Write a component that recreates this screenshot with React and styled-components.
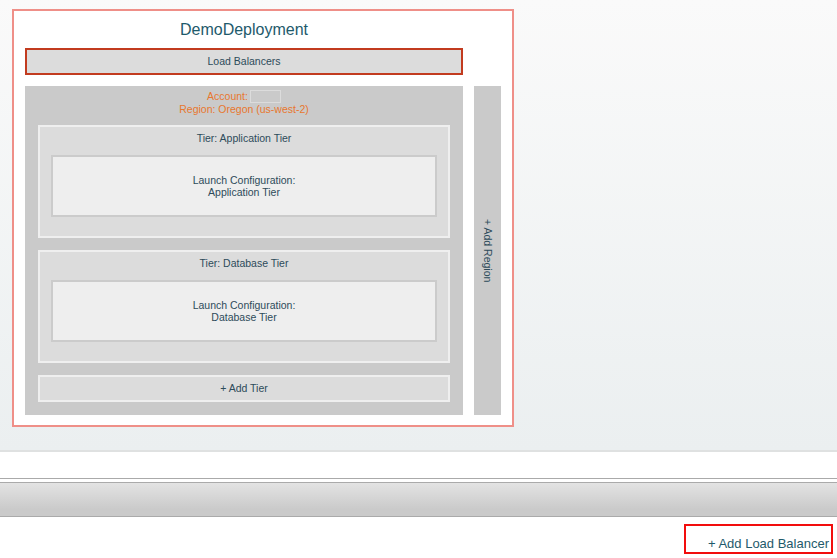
import styled, { createGlobalStyle } from "styled-components"

const GlobalStyle = createGlobalStyle`
    body {
        margin: 0;
        background: #ffffff;
        font-family: "Liberation Sans", Arial, Helvetica, sans-serif;
    }
`

const Canvas = styled.div`
    height: 441px;
    padding: 9px 0 0 12px;
    background: linear-gradient(#fafafa, #ebeff0);
    border-bottom: 2px solid #dfe1e1;
`

const Deployment = styled.div`
    width: 502px;
    height: 418px;
    box-sizing: border-box;
    padding: 11px;
    background: #ffffff;
    border: 2px solid #ef8f88;
    display: flex;
    align-items: flex-start;
    gap: 11px;
`

const Main = styled.div`
    width: 438px;
    display: flex;
    flex-direction: column;
`

const Title = styled.h1`
    margin: 0 0 10px;
    font-size: 16px;
    line-height: 16px;
    font-weight: normal;
    text-align: center;
    color: #1e5a6b;
`

const Bar = styled.div`
    height: ${(p) => p.$height || 27}px;
    box-sizing: border-box;
    border: 2px solid ${(p) => p.$border || "#efefef"};
    background: #dcdcdc;
    font-size: 10.5px;
    line-height: ${(p) => (p.$height || 27) - 4}px;
    text-align: center;
    color: #2d4b5a;
    margin-bottom: ${(p) => p.$gap || 0}px;
`

const Region = styled.div`
    height: 329px;
    box-sizing: border-box;
    padding: 4px 13px 0;
    background: #cacaca;
    display: flex;
    flex-direction: column;
`

const RegionHead = styled.div`
    height: 24px;
    font-size: 10.5px;
    line-height: 12px;
    text-align: center;
    color: #e8772e;
    margin-bottom: 11px;
`

const Blank = styled.span`
    display: inline-block;
    width: 29px;
    height: 11px;
    margin-left: 2px;
    vertical-align: -3px;
    border: 1px solid #dcdcdc;
`

const Tier = styled.div`
    height: 113px;
    box-sizing: border-box;
    padding: 5px 11px 0;
    border: 2px solid #efefef;
    background: #dcdcdc;
    margin-bottom: 12px;
`

const TierTitle = styled.div`
    font-size: 10.5px;
    line-height: 12px;
    text-align: center;
    color: #2d4b5a;
    margin-bottom: 11px;
`

const Launch = styled.div`
    height: 62px;
    box-sizing: border-box;
    border: 2px solid #cbcbcb;
    background: #eeeeee;
    display: flex;
    align-items: center;
    justify-content: center;
    text-align: center;
    font-size: 10.5px;
    line-height: 12px;
    color: #2d4b5a;
`

const AddRegion = styled.div`
    width: 27px;
    height: 329px;
    margin-top: 64px;
    background: #cacaca;
    display: flex;
    align-items: center;
    justify-content: center;
    writing-mode: vertical-rl;
    font-size: 10.5px;
    line-height: 12px;
    color: #2d4b5a;
`

const Toolbar = styled.div`
    margin-top: 26px;
    border-top: 1px solid #aaaaaa;
    padding-top: 3px;
`

const ToolbarBar = styled.div`
    height: 33px;
    border-top: 1px solid #aaaaaa;
    border-bottom: 1px solid #aaaaaa;
    background: linear-gradient(#e3e3e3, #cacaca 80%);
`

const Footer = styled.div`
    display: flex;
    justify-content: flex-end;
    padding: 7px 4px 0 0;
`

const AddButton = styled.div`
    width: 149px;
    height: 30px;
    box-sizing: border-box;
    border: 2px solid #f20d0d;
    display: flex;
    align-items: flex-end;
    justify-content: flex-end;
    padding: 0 2px 1px 0;
    font-size: 13px;
    line-height: 14px;
    color: #1e5a6b;
    cursor: pointer;
`

const tiers = ["Application Tier", "Database Tier"]

export default function App() {
    return (
        <>
            <GlobalStyle />
            <Canvas>
                <Deployment>
                    <Main>
                        <Title>DemoDeployment</Title>
                        <Bar $border="#c23b1f" $gap={11}>Load Balancers</Bar>
                        <Region>
                            <RegionHead>
                                Account:<Blank />
                                <br />
                                Region: Oregon (us-west-2)
                            </RegionHead>
                            {tiers.map((t) => (
                                <Tier key={t}>
                                    <TierTitle>Tier: {t}</TierTitle>
                                    <Launch>
                                        Launch Configuration:
                                        <br />
                                        {t}
                                    </Launch>
                                </Tier>
                            ))}
                            <Bar>+ Add Tier</Bar>
                        </Region>
                    </Main>
                    <AddRegion>+ Add Region</AddRegion>
                </Deployment>
            </Canvas>
            <Toolbar>
                <ToolbarBar />
            </Toolbar>
            <Footer>
                <AddButton>+ Add Load Balancer</AddButton>
            </Footer>
        </>
    )
}
